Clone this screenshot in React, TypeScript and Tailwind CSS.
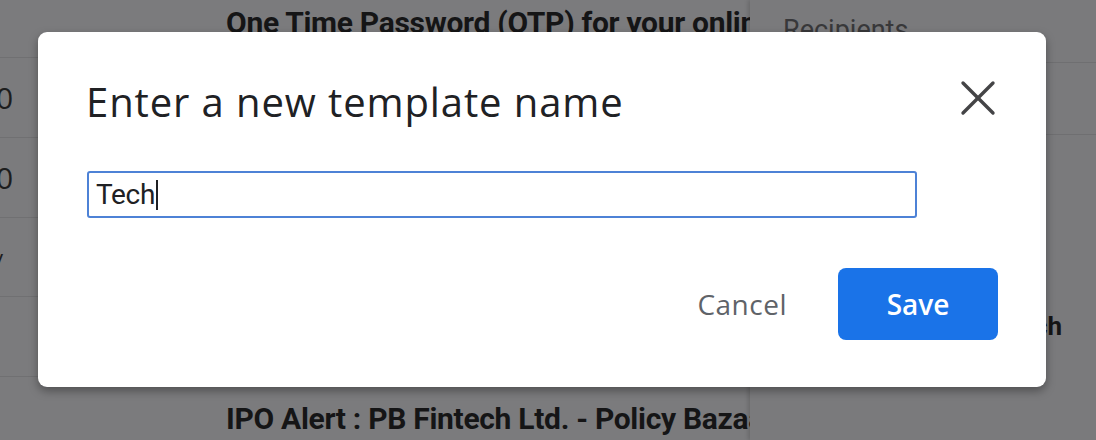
import { X } from "lucide-react"

const rowText = "font-['Roboto',sans-serif] font-bold text-[30px] text-[#151516] tracking-[-0.3px]"

export default function App() {
  return (
    <div className="relative h-[440px] w-[1096px] overflow-hidden bg-[#7b7b7d]">
      {/* page behind the dialog */}
      <div className="flex h-full">
        <div className="w-[750px] flex flex-col shrink-0">
          <div className="h-[58px] border-b border-[#707072] pl-[226px] whitespace-nowrap overflow-hidden">
            <span className={rowText}>One Time Password (OTP) for your online banking</span>
          </div>
          <div className="h-[80px] border-b border-[#707072] flex items-center -ml-[4px]">
            <span className="font-['Open_Sans',sans-serif] text-[30px] text-[#1d1d1e]">0</span>
          </div>
          <div className="h-[80px] border-b border-[#707072] flex items-center -ml-[4px]">
            <span className="font-['Open_Sans',sans-serif] text-[30px] text-[#1d1d1e]">0</span>
          </div>
          <div className="h-[79px] border-b border-[#707072] flex items-center -ml-[8px]">
            <span className="font-['Open_Sans',sans-serif] text-[22px] text-[#1d1d1e]">y</span>
          </div>
          <div className="h-[80px] border-b border-[#707072]"></div>
          <div className="flex-1 pl-[226px] pt-[19px] whitespace-nowrap overflow-hidden">
            <span className={rowText}>IPO Alert : PB Fintech Ltd. - Policy Bazaar</span>
          </div>
        </div>
        <div className="flex-1 flex flex-col bg-[#7a7a7c] shadow-[-2px_0_4px_rgba(0,0,0,0.15)]">
          <div className="h-[63px] border-b border-[#6f6f71] pl-[33px] pt-[10px]">
            <span className="font-['Roboto',sans-serif] text-[27px] text-[#38383a]">Recipients</span>
          </div>
          <div className="h-[72px] border-b border-[#6f6f71]"></div>
          <div className="flex justify-end pr-[34px] pt-[172px]">
            <span className="font-['Roboto',sans-serif] font-bold text-[26px] text-[#151516]">Search</span>
          </div>
        </div>
      </div>

      {/* dialog */}
      <div className="absolute left-[38px] top-[32px] w-[1008px] h-[355px] rounded-[9px] bg-white shadow-[0_4px_10px_rgba(0,0,0,0.35)] px-[49px] pt-[44px]">
        <div className="flex items-start justify-between">
          <h1 className="font-['Open_Sans',sans-serif] text-[40px] leading-[52px] text-[#202124] tracking-[0.9px] -ml-[1px]">
            Enter a new template name
          </h1>
          <button className="mr-[-11px] mt-[-8px] text-[#444446]">
            <X size={60} strokeWidth={1.35} />
          </button>
        </div>
        <div className="mt-[43px] w-[830px] h-[47px] rounded-[3px] border-2 border-[#4d82d6] flex items-center px-[7px]">
          <span className="font-['Roboto',sans-serif] text-[28px] text-[#202124] tracking-[-0.3px]">Tech</span>
          <span className="ml-[1px] w-[2px] h-[30px] bg-[#202124]"></span>
        </div>
        <div className="flex justify-end items-center mt-[50px] mr-[-1px] gap-[51px]">
          <span className="font-['Open_Sans',sans-serif] text-[28px] text-[#5f6368] tracking-[0.5px]">Cancel</span>
          <button className="w-[160px] h-[72px] rounded-[8px] bg-[#1a73e8] font-['Open_Sans',sans-serif] font-semibold text-[28px] text-white">
            Save
          </button>
        </div>
      </div>
    </div>
  )
}
